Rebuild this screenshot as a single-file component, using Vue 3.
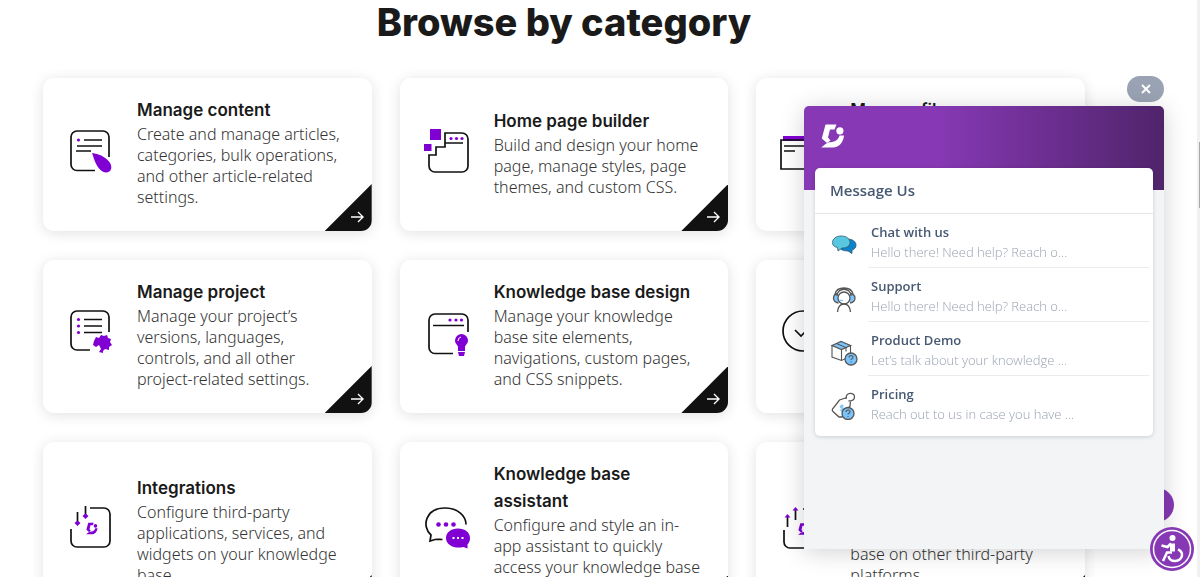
<template>
  <main class="page">
    <h1 class="page__title">Browse by category</h1>

    <div class="grid">
      <a v-for="card in cards" :key="card.title" href="#" class="card">
        <svg class="card__icon" viewBox="0 0 48 48" fill="none" stroke="#111" stroke-width="1.7">
          <g v-if="card.icon === 'content'">
            <path d="M28 41.500H10a6 6 0 0 1-6-6V8a6 6 0 0 1 6-6h26a6 6 0 0 1 6 6v20" />
            <path d="M17 11h18M10 17h25M9 22h15" />
            <circle cx="11.500" cy="11" r="1.600" class="fill" />
            <path d="M25 24c7 1 12 3 17 8.500 5.500 7 .5 13.500-6.500 10C29 38 27.500 31 25 24Z" class="fill" />
          </g>
          <g v-else-if="card.icon === 'builder'">
            <path d="M21 4h17a6 6 0 0 1 6 6v27a6 6 0 0 1-6 6H11a6 6 0 0 1-6-6V26h7v-8h9ZM21 14h18" />
            <path d="M6 0h11v11H6ZM0 15h7.500v7H0Z" class="fill" />
            <g class="fill">
              <circle cx="27" cy="9.500" r="1.600" />
              <circle cx="32.500" cy="9.500" r="1.600" />
              <circle cx="38" cy="9.500" r="1.600" />
            </g>
          </g>
          <g v-else-if="card.icon === 'files'">
            <path d="M3 7h44v5H3Z" class="fill" />
            <path d="M1 11h46v29H1ZM4 17h30M4 22h11" />
          </g>
          <g v-else-if="card.icon === 'project'">
            <path d="M23 39H10a6 6 0 0 1-6-6V6a6 6 0 0 1 6-6h26a6 6 0 0 1 6 6v15M17 8.500h18M17 15h18M17 21.500h18" />
            <g class="fill">
              <circle cx="11.500" cy="8.500" r="1.600" />
              <circle cx="11.500" cy="15" r="1.600" />
              <circle cx="11.500" cy="21.500" r="1.600" />
              <path d="m29 26 3 1 2-3 3 1 3-1 1 3 3 1-1 3 2 3-3 2v3l-4-1-2 2v2l-4-1 2-3-2-4-3 2-3-2 1-4Z" />
            </g>
          </g>
          <g v-else-if="card.icon === 'design'">
            <path d="M29 42.500H11a6 6 0 0 1-6-6V9a6 6 0 0 1 6-6h27a6 6 0 0 1 6 6v12M9 14.500h31" />
            <g class="fill">
              <circle cx="26" cy="9" r="1.600" />
              <circle cx="32" cy="9" r="1.600" />
              <circle cx="37.500" cy="9" r="1.600" />
              <path d="M34 36c0-2-3-3-3-6.500a6.500 6.500 0 0 1 13 0c0 3.500-3 4.500-3 6.500v4h-7Zm0 5h7l-1 4h-5Z" />
            </g>
            <path d="M34 30a4 4 0 0 1 3-4" stroke="#fff" stroke-width="1" />
          </g>
          <g v-else-if="card.icon === 'workflow'">
            <circle cx="23" cy="20" r="20" />
            <path d="m15 19 6 6 13-13" />
          </g>
          <g v-else-if="card.icon === 'integrations'">
            <path d="M23 2h14a6 6 0 0 1 6 6v27a6 6 0 0 1-6 6H10a6 6 0 0 1-6-6V23M18.500 0v11M10.500 6v11" />
            <path d="m18.500 7.500 3 2.500-3 3-3-3ZM10.500 14.500l3 2.500-3 3-3-3Z" class="fill" />
            <g class="fill" transform="translate(19 16.500) scale(.5)">
              <path v-for="d in logo" :key="d" :d="d" />
            </g>
          </g>
          <g v-else-if="card.icon === 'assistant'">
            <path d="M18.500 33.500c-3 0-5-.5-7.500 0l-5 1.500 1-6C-3 20 2 2 21 2c13 0 21 8 21 16.500" />
            <path d="M34 22.500c7 0 12 4 12 9.500 0 3-1 5-2.500 6.500v4l-4-1.500C31 43 22 39.500 22 32c0-5.500 5-9.500 12-9.500Z" class="fill" />
            <g class="fill">
              <circle cx="14.500" cy="18.500" r="2.300" />
              <circle cx="22" cy="18.500" r="2.300" />
              <circle cx="29.500" cy="18.500" r="2.300" />
            </g>
            <path d="M28.500 32h2m2.500 0h2m2.500 0h2" stroke="#fff" stroke-width="2" />
          </g>
          <g v-else>
            <path d="M23 3h14a6 6 0 0 1 6 6v27a6 6 0 0 1-6 6H10a6 6 0 0 1-6-6V24M15.500 4v10M7.500 11v10" />
            <path d="m15.500 1 3 3.500h-6ZM7.500 8l3 3.500h-6Z" class="fill" />
            <g class="fill" transform="translate(18 17) scale(.5)">
              <path v-for="d in logo" :key="d" :d="d" />
            </g>
          </g>
        </svg>
        <div class="card__text">
          <h2 class="card__title">{{ card.title }}</h2>
          <p class="card__desc">{{ card.desc }}</p>
        </div>
        <span class="card__corner">
          <svg viewBox="0 0 14 12" fill="none" stroke="#fff" stroke-width="1.4">
            <path d="M0 6h13M7.500 .7 13 6l-5.500 5.300" />
          </svg>
        </span>
      </a>
    </div>
  </main>

  <button class="launcher" aria-label="Open chat"></button>

  <button class="close" aria-label="Close chat">
    <svg viewBox="0 0 10 10" fill="none" stroke="#fff" stroke-width="2">
      <path d="m1 1 8 8M9 1 1 9" />
    </svg>
  </button>

  <aside class="widget">
    <header class="widget__header">
      <svg class="widget__logo" viewBox="0 0 24 24" fill="#fff">
        <path v-for="d in logo" :key="d" :d="d" />
      </svg>
    </header>
    <section class="inbox">
      <h2 class="inbox__title">Message Us</h2>
      <a v-for="item in channels" :key="item.title" href="#" class="channel">
        <svg class="channel__icon" viewBox="0 0 28 28" fill="none" stroke="#555" stroke-width="1.3">
          <g v-if="item.icon === 'chat'" stroke="#345b70" stroke-width=".8">
            <path d="M17 8c6 0 9 3 9 6 0 2.500-1 4-4 5v3.500L18 20c-7 0-9-3-9-6s3-6 8-6Z" fill="#0b83cc" />
            <path d="M11 5c6 0 9 3 9 6.500S17 17 12 17l-4 3-.5-3.500C4 16 2.500 14 2.500 11.500 2.500 8 6 5 11 5Z" fill="#58c8e1" />
          </g>
          <g v-else-if="item.icon === 'support'">
            <path d="M8 8.500C4 9 3.500 12 3.500 13c0 3 2 4.500 5 5M20 8.500c4 .5 5 3 5 4.500 0 3-2 4.500-5 5" fill="#7fc4fa" />
            <circle cx="14" cy="13" r="6" fill="#fff" />
            <path d="M7 11c0-9 14-9 14 0M5 9c2-8 16-8 18 0M7.500 27c.5-5 3-8 6.500-8s6 3 6.500 8" />
            <path d="M9.500 15.500H13" stroke="#7fc4fa" />
          </g>
          <g v-else-if="item.icon === 'demo'">
            <path d="m2 6.500 9-4 9.500 4-9 4Z" fill="#7fc4fa" />
            <path d="M2 6.500V18l9.500 3.500 9-4v-11M11.500 10.500v11M6.500 4.500l9.500 4v4" stroke-width="1.100" />
            <circle cx="21" cy="20" r="6" fill="#78c3fb" />
            <path d="M19 18.500c0-2.800 4.500-2.500 4 0-.3 1.500-2 1-2 2.500M21 22.500v1" stroke-width="1.100" />
          </g>
          <g v-else>
            <path d="M17 5.500 9.500 8 2.500 17c-.5 1 0 2 .5 2.500L9 25h3l8-11 .5-4.500" />
            <path d="M16 7c-.5-8 9-6.500 8.500-2 0 3-3 4-6 4" />
            <path d="M13.500 14.500c-1-1.500-3.500-1-3 .5.5 1.500 3 .5 3 2s-2.500 2-3.500.5M12 12.500v7" stroke="#7fc4fa" />
            <circle cx="18" cy="21.500" r="6" fill="#78c3fb" />
            <path d="M16 20c0-2.800 4.500-2.500 4 0-.3 1.500-2 1-2 2.500M18 24v1" stroke-width="1.100" />
          </g>
        </svg>
        <div class="channel__text">
          <h3 class="channel__title">{{ item.title }}</h3>
          <p class="channel__desc">{{ item.desc }}</p>
        </div>
      </a>
    </section>
  </aside>

  <button class="access" aria-label="Accessibility options">
    <svg viewBox="0 0 44 44" fill="none" stroke="#fff">
      <circle cx="22" cy="22" r="18.500" stroke-width="1.500" />
      <circle cx="22.500" cy="11" r="3" fill="#fff" stroke="none" />
      <path d="M22.500 16.500v8" stroke-width="5" />
      <path d="M22 25.500h-5L13 34" stroke-width="2.500" />
      <path d="M21 16.500 17.500 20l-6-1.500" stroke-width="2.500" />
      <path d="M18.500 29c1 7 12.500 6.500 13.500-.5.300-3-1.500-5-4-6" stroke-width="2.500" />
    </svg>
  </button>

  <div class="scrollbar"><div class="scrollbar__thumb" /></div>
</template>

<script setup>
// brand mark, drawn on a 24x24 grid
const logo = [
  'M4.500 .5H15.500L13.500 5.500H9L7 13.500l2.500 3L6 19 .8 14.500Z',
  'M22.500 6.800a3.600 3.600 0 1 1-7.200 0 3.600 3.600 0 0 1 7.200 0Z',
  'm18.500 11.500 4.500 0C22.500 18 18 23.500 12 23.500H0c2-1 4-4 8-5.200 6 0 9.500-2.500 10.500-6.800Z',
]

const cards = [
  {
    icon: 'content',
    title: 'Manage content',
    desc: 'Create and manage articles, categories, bulk operations, and other article-related settings.',
  },
  {
    icon: 'builder',
    title: 'Home page builder',
    desc: 'Build and design your home page, manage styles, page themes, and custom CSS.',
  },
  {
    icon: 'files',
    title: 'Manage files',
    desc: 'Upload and manage images, documents, and other files used across your knowledge base.',
  },
  {
    icon: 'project',
    title: 'Manage project',
    desc: 'Manage your project’s versions, languages, controls, and all other project-related settings.',
  },
  {
    icon: 'design',
    title: 'Knowledge base design',
    desc: 'Manage your knowledge base site elements, navigations, custom pages, and CSS snippets.',
  },
  {
    icon: 'workflow',
    title: 'Workflow',
    desc: 'Create and manage the workflow for your articles.',
  },
  {
    icon: 'integrations',
    title: 'Integrations',
    desc: 'Configure third-party applications, services, and widgets on your knowledge base.',
  },
  {
    icon: 'assistant',
    title: 'Knowledge base assistant',
    desc: 'Configure and style an in-app assistant to quickly access your knowledge base content.',
  },
  {
    icon: 'extensions',
    title: 'Extensions',
    desc: 'Configure extensions to surface your full knowledge base on other third-party platforms.',
  },
]

const channels = [
  { icon: 'chat', title: 'Chat with us', desc: 'Hello there! Need help? Reach o...' },
  { icon: 'support', title: 'Support', desc: 'Hello there! Need help? Reach o...' },
  { icon: 'demo', title: 'Product Demo', desc: 'Let’s talk about your knowledge ...' },
  { icon: 'pricing', title: 'Pricing', desc: 'Reach out to us in case you have ...' },
]
</script>

<style>
body {
  margin: 0;
  overflow: hidden;
  background: #fff;
}
</style>

<style scoped>
h1, h2, h3, p {
  margin: 0;
}

a {
  color: inherit;
  text-decoration: none;
}

button {
  padding: 0;
  border: 0;
  cursor: pointer;
}

.page {
  box-sizing: border-box;
  height: 100vh;
  overflow: hidden;
  padding: 0 115px 0 43px;
}

.page__title {
  font: 800 38px/44px Inter, sans-serif;
  color: #1a1a1a;
  text-align: center;
  margin-bottom: 34px;
}

.grid {
  display: grid;
  grid-template-columns: repeat(3, 1fr);
  gap: 29px 28px;
}

.card {
  position: relative;
  display: flex;
  align-items: center;
  gap: 22px;
  padding: 19px 24px 23px 24px;
  border-radius: 11px;
  background: #fff;
  box-shadow: 0 2px 14px rgba(0, 0, 0, 0.12);
  overflow: hidden;
}

.card__icon {
  width: 48px;
  height: 48px;
  flex-shrink: 0;
  overflow: visible;
}

.fill {
  fill: #8000d4;
  stroke: none;
}

.card__text {
  min-width: 0;
}

.card__title {
  font: 600 17px/27px Inter, sans-serif;
  color: #1a1a1a;
}

.card__desc {
  font: 300 16px/21px "Noto Sans", sans-serif;
  color: #333;
}

.card__corner {
  position: absolute;
  right: 0;
  bottom: 0;
  width: 47px;
  height: 47px;
  background: #111;
  clip-path: polygon(100% 0, 100% 100%, 0 100%);
}

.card__corner svg {
  position: absolute;
  right: 8px;
  bottom: 8px;
  width: 13px;
  height: 12px;
}

.close {
  position: fixed;
  top: 76px;
  right: 36px;
  display: flex;
  align-items: center;
  justify-content: center;
  width: 37px;
  height: 26px;
  border-radius: 13px;
  background: #9aa3b3;
}

.close svg {
  width: 10px;
  height: 10px;
}

.widget {
  position: fixed;
  top: 106px;
  right: 36px;
  bottom: 28px;
  width: 360px;
  border-radius: 5px 5px 0 0;
  background: #f3f4f6;
  box-shadow: 0 3px 24px rgba(0, 0, 0, 0.18);
  font-family: "Open Sans", sans-serif;
}

.widget__header {
  box-sizing: border-box;
  height: 84px;
  padding: 18px 17px;
  border-radius: 5px 5px 0 0;
  background: linear-gradient(90deg, #8739b5 36%, #50246b);
}

.widget__logo {
  display: block;
  width: 24px;
  height: 24px;
}

.inbox {
  margin: -22px 11px 0;
  padding-bottom: 7px;
  border-radius: 5px;
  background: #fff;
  box-shadow: 0 1px 4px rgba(0, 0, 0, 0.16);
}

.inbox__title {
  padding: 0 15px;
  border-bottom: 1px solid #e5e7ec;
  font-size: 15px;
  font-weight: 600;
  line-height: 45px;
  color: #475872;
}

.channel {
  display: flex;
  align-items: center;
  gap: 8px;
  padding: 0 4px 0 15px;
}

.channel__icon {
  width: 28px;
  height: 28px;
  margin-top: 7px;
  flex-shrink: 0;
}

.channel__text {
  flex: 1;
  margin-left: 2px;
  padding: 8px 3px 5px;
  border-bottom: 1px solid #e9ebef;
}

.channel:last-child .channel__text {
  border-bottom: 0;
}

.channel__title {
  font-size: 13px;
  font-weight: 600;
  line-height: 20px;
  color: #475872;
}

.channel__desc {
  font-size: 13px;
  font-weight: 300;
  line-height: 20px;
  color: #9aa2b1;
}

.launcher {
  position: fixed;
  right: 26px;
  bottom: 55px;
  width: 34px;
  height: 34px;
  border-radius: 50%;
  background: #8739b5;
}

.access {
  position: fixed;
  right: 6px;
  bottom: 6px;
  width: 44px;
  height: 44px;
  border-radius: 50%;
  background: #8739b5;
}

.access svg {
  display: block;
}

.scrollbar {
  position: fixed;
  top: 0;
  right: 0;
  bottom: 0;
  width: 3px;
  background: #f1f1f1;
}

.scrollbar__thumb {
  position: absolute;
  top: 142px;
  right: 0;
  width: 1px;
  height: 66px;
  background: #a8a8a8;
}
</style>
